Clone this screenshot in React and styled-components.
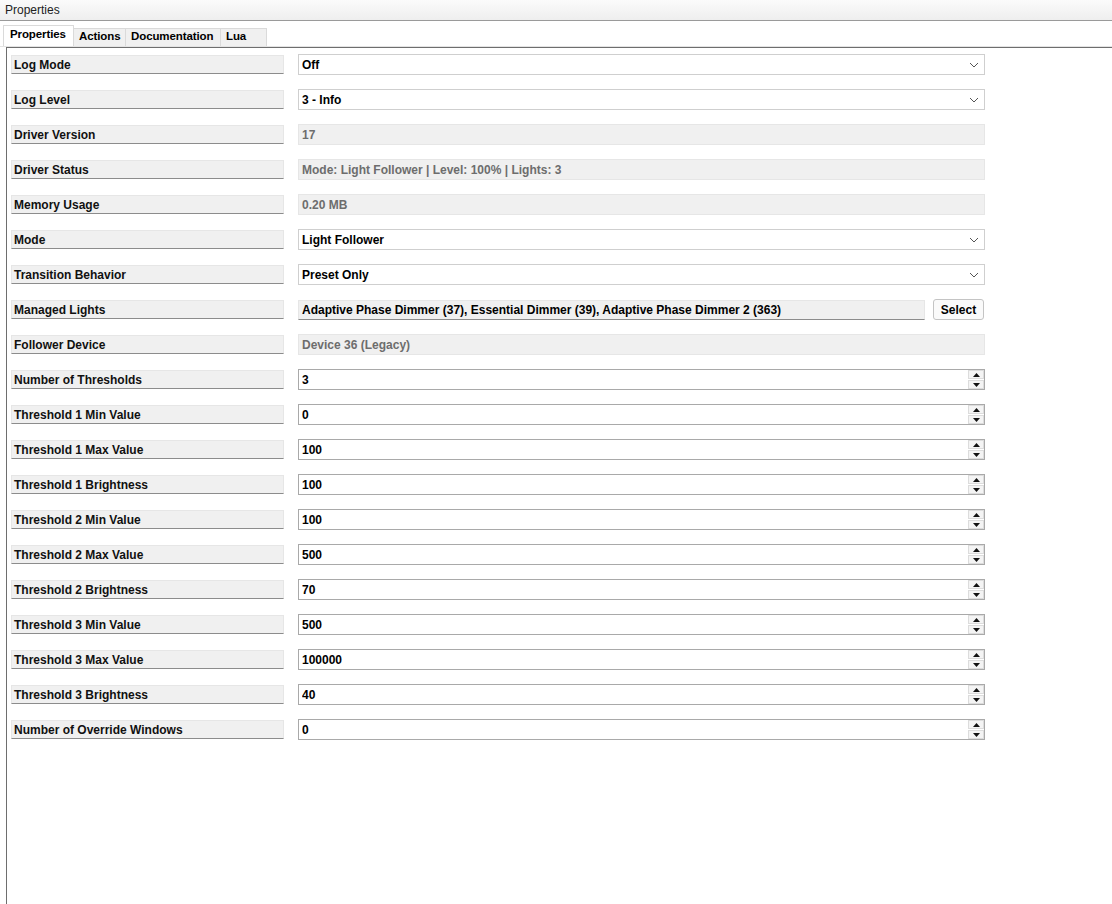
import React from "react";
import styled, { createGlobalStyle } from "styled-components";

const Global = createGlobalStyle`
  html, body {
    margin: 0;
    padding: 0;
    background: #ffffff;
  }
  body {
    font-family: "Liberation Sans", Arial, sans-serif;
  }
`;

const rows = [
  { label: "Log Mode", kind: "select", value: "Off" },
  { label: "Log Level", kind: "select", value: "3 - Info" },
  { label: "Driver Version", kind: "readonly", value: "17" },
  { label: "Driver Status", kind: "readonly", value: "Mode: Light Follower | Level: 100% | Lights: 3" },
  { label: "Memory Usage", kind: "readonly", value: "0.20 MB" },
  { label: "Mode", kind: "select", value: "Light Follower" },
  { label: "Transition Behavior", kind: "select", value: "Preset Only" },
  {
    label: "Managed Lights",
    kind: "pick",
    value: "Adaptive Phase Dimmer (37), Essential Dimmer (39), Adaptive Phase Dimmer 2 (363)",
  },
  { label: "Follower Device", kind: "readonly", value: "Device 36 (Legacy)" },
  { label: "Number of Thresholds", kind: "spin", value: "3" },
  { label: "Threshold 1 Min Value", kind: "spin", value: "0" },
  { label: "Threshold 1 Max Value", kind: "spin", value: "100" },
  { label: "Threshold 1 Brightness", kind: "spin", value: "100" },
  { label: "Threshold 2 Min Value", kind: "spin", value: "100" },
  { label: "Threshold 2 Max Value", kind: "spin", value: "500" },
  { label: "Threshold 2 Brightness", kind: "spin", value: "70" },
  { label: "Threshold 3 Min Value", kind: "spin", value: "500" },
  { label: "Threshold 3 Max Value", kind: "spin", value: "100000" },
  { label: "Threshold 3 Brightness", kind: "spin", value: "40" },
  { label: "Number of Override Windows", kind: "spin", value: "0" },
];

// tab widths measured from the screenshot
const tabs = [
  { name: "Properties", width: 71 },
  { name: "Actions", width: 53 },
  { name: "Documentation", width: 96 },
  { name: "Lua", width: 47 },
];

const Chevron = () => (
  <svg width="10" height="6" viewBox="0 0 10 6">
    <path d="M1 1 L5 5 L9 1" fill="none" stroke="#555" strokeWidth="1" />
  </svg>
);

const Arrow = ({ up }) => (
  <svg width="7" height="4" viewBox="0 0 7 4">
    <path d={up ? "M0 4 L3.5 0 L7 4 Z" : "M0 0 L3.5 4 L7 0 Z"} fill="#111" />
  </svg>
);

export default function App() {
  return (
    <>
      <Global />
      <Window>
        <TitleBar>Properties</TitleBar>
        <TabStrip>
          {tabs.map((t, i) => (
            <Tab key={t.name} active={i === 0} width={t.width}>
              {t.name}
            </Tab>
          ))}
        </TabStrip>
        <Panel>
          <List>
            {rows.map((r) => (
              <Row key={r.label}>
                <Label>{r.label}</Label>
                {r.kind === "select" && (
                  <Field>
                    <Value>{r.value}</Value>
                    <Drop>
                      <Chevron />
                    </Drop>
                  </Field>
                )}
                {r.kind === "readonly" && (
                  <Field readOnly>
                    <Value muted>{r.value}</Value>
                  </Field>
                )}
                {r.kind === "pick" && (
                  <PickWrap>
                    <PickField>
                      <Value>{r.value}</Value>
                    </PickField>
                    <Button>Select</Button>
                  </PickWrap>
                )}
                {r.kind === "spin" && (
                  <Field spin>
                    <Value>{r.value}</Value>
                    <Spinner>
                      <SpinBtn>
                        <Arrow up />
                      </SpinBtn>
                      <SpinBtn>
                        <Arrow />
                      </SpinBtn>
                    </Spinner>
                  </Field>
                )}
              </Row>
            ))}
          </List>
        </Panel>
      </Window>
    </>
  );
}

const Window = styled.div`
  width: 1112px;
  height: 904px;
  display: flex;
  flex-direction: column;
  overflow: hidden;
  background: #fff;
`;

const TitleBar = styled.div`
  height: 21px;
  flex-shrink: 0;
  box-sizing: border-box;
  padding: 3px 0 0 5px;
  font-size: 12px;
  color: #222;
  background: linear-gradient(#fbfbfb, #eeeeee);
  border-bottom: 1px solid #9a9a9a;
`;

const TabStrip = styled.div`
  display: flex;
  align-items: flex-end;
  height: 26px;
  flex-shrink: 0;
  padding-left: 3px;
  box-sizing: border-box;
  border-bottom: 1px solid #e3e3e3;
`;

const Tab = styled.div`
  box-sizing: border-box;
  width: ${({ width }) => width}px;
  height: ${({ active }) => (active ? "21px" : "18px")};
  padding: ${({ active }) => (active ? "2px 0 0 6px" : "1px 0 0 5px")};
  font-size: 11.5px;
  font-weight: bold;
  letter-spacing: -0.1px;
  color: #000;
  white-space: nowrap;
  background: ${({ active }) => (active ? "#fff" : "#f0f0f0")};
  border: 1px solid #dadada;
  border-bottom: none;
  margin-right: -1px;
  position: relative;
  z-index: ${({ active }) => (active ? 1 : 0)};
`;

const Panel = styled.div`
  flex: 1;
  margin-left: 6px;
  border-left: 1px solid #6e6e6e;
  border-top: 1px solid #6e6e6e;
  padding: 6px 0 0 4px;
`;

const List = styled.div`
  display: flex;
  flex-direction: column;
  gap: 14px;
`;

const Row = styled.div`
  display: flex;
  align-items: center;
  height: 21px;
  gap: 14px;
`;

const Label = styled.div`
  width: 273px;
  height: 19px;
  box-sizing: border-box;
  flex-shrink: 0;
  padding: 2px 0 0 2px;
  background: #f0f0f0;
  border: 1px solid #e6e6e6;
  border-bottom: 1px solid #8c8c8c;
  font-size: 12px;
  font-weight: bold;
  color: #111;
  white-space: nowrap;
`;

const Field = styled.div`
  width: 687px;
  height: 21px;
  box-sizing: border-box;
  display: flex;
  align-items: center;
  background: ${({ readOnly }) => (readOnly ? "#f0f0f0" : "#fff")};
  border: 1px solid ${({ readOnly, spin }) => (readOnly ? "#e6e6e6" : spin ? "#a9a9a9" : "#cfcfcf")};
  padding-left: 3px;
  position: relative;
`;

const Value = styled.span`
  flex: 1;
  font-size: 12px;
  font-weight: bold;
  color: ${({ muted }) => (muted ? "#6d6d6d" : "#000")};
  white-space: nowrap;
  overflow: hidden;
`;

const Drop = styled.div`
  width: 18px;
  display: flex;
  align-items: center;
  justify-content: center;
  margin-right: 1px;
`;

const Spinner = styled.div`
  width: 16px;
  height: 19px;
  display: flex;
  flex-direction: column;
  gap: 1px;
`;

const SpinBtn = styled.div`
  flex: 1;
  display: flex;
  align-items: center;
  justify-content: center;
  background: #f4f4f4;
  border: 1px solid #dcdcdc;
  box-sizing: border-box;
`;

const PickWrap = styled.div`
  width: 687px;
  display: flex;
  align-items: center;
  gap: 8px;
`;

const PickField = styled.div`
  flex: 1;
  height: 20px;
  box-sizing: border-box;
  display: flex;
  align-items: center;
  padding-left: 3px;
  background: #f0f0f0;
  border: 1px solid #e6e6e6;
  border-bottom: 1px solid #8c8c8c;
`;

const Button = styled.button`
  width: 51px;
  height: 21px;
  box-sizing: border-box;
  padding: 0;
  font-family: "Liberation Sans", Arial, sans-serif;
  font-size: 12px;
  font-weight: bold;
  color: #000;
  background: #fafafa;
  border: 1px solid #c4c4c4;
  border-radius: 3px;
  margin-right: 1px;
`;
